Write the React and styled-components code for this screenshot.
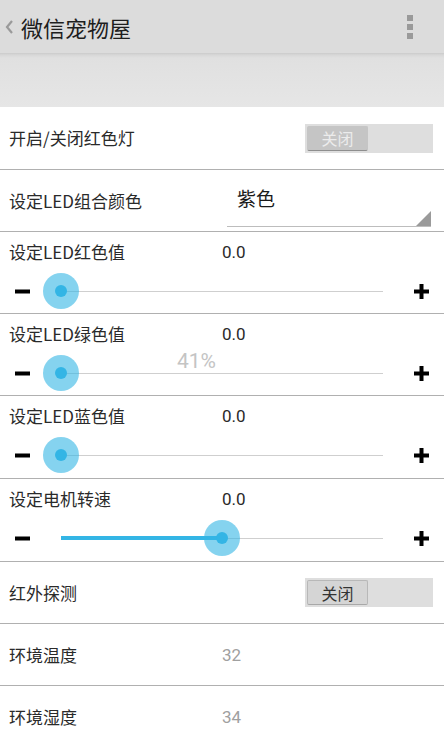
import React from "react";
import styled, { createGlobalStyle } from "styled-components";

const Global = createGlobalStyle`
  html, body { margin: 0; padding: 0; background: #fff; }
  body {
    font-family: "Noto Sans CJK SC", "Noto Sans", sans-serif;
    color: #222;
    overflow: hidden;
  }
`;

const Page = styled.div`
  width: 444px;
  display: flex;
  flex-direction: column;
`;

const Header = styled.div`
  height: 53px;
  background: #dcdcdc;
  display: flex;
  align-items: center;
  padding: 0 0 0 4px;
`;

const Back = styled.svg`
  width: 10px;
  height: 16px;
  margin-right: 7px;
`;

const Title = styled.div`
  font-size: 22px;
  color: #1e1e1e;
  flex: 1;
  line-height: 1;
`;

const Menu = styled.div`
  width: 6px;
  display: flex;
  flex-direction: column;
  gap: 3px;
  margin-right: 31px;
`;

const Dot = styled.div`
  width: 6px;
  height: 6px;
  background: #9a9a9a;
`;

const Band = styled.div`
  height: 54px;
  background: linear-gradient(#cbcbcb 0, #d8d8d8 2px, #e0e0e0 5px, #e6e6e6 100%);
`;

const Row = styled.div`
  height: ${(p) => p.$h}px;
  border-bottom: 1px solid #b0b0b0;
  display: flex;
  align-items: center;
  padding-left: 9px;
  position: relative;
  box-sizing: content-box;
`;

const Label = styled.div`
  font-size: 17px;
  color: #2a2a2a;
  width: ${(p) => p.$w || 213}px;
  flex-shrink: 0;
  line-height: 22px;
`;

const Value = styled.div`
  font-size: 17px;
  color: ${(p) => (p.$muted ? "#a0a0a0" : "#2a2a2a")};
  font-family: "Roboto", "Noto Sans", sans-serif;
  line-height: 22px;
`;

const SwitchTrack = styled.div`
  margin-left: auto;
  margin-right: 11px;
  width: 128px;
  height: 29px;
  background: #dedede;
  box-sizing: border-box;
  padding: 2px;
  display: flex;
`;

const SwitchThumb = styled.div`
  width: 61px;
  height: 25px;
  box-sizing: border-box;
  border-radius: 2px;
  display: flex;
  align-items: center;
  justify-content: center;
  font-size: 16px;
  background: ${(p) => (p.$disabled ? "#c5c5c5" : "#d5d5d5")};
  color: ${(p) => (p.$disabled ? "#ececec" : "#333")};
  border: 1px solid ${(p) => (p.$disabled ? "#c5c5c5" : "#b8b8b8")};
  border-bottom-color: ${(p) => (p.$disabled ? "#8e8e8e" : "#a8a8a8")};
`;

const Spinner = styled.div`
  width: 204px;
  height: 44px;
  margin-top: 8px;
  border-bottom: 1px solid #bdbdbd;
  position: relative;
  display: flex;
  align-items: flex-start;
  padding-left: 10px;
  box-sizing: border-box;
`;

const SpinnerText = styled.div`
  font-size: 19px;
  color: #1a1a1a;
  line-height: 24px;
  margin-top: 3px;
`;

const Corner = styled.svg`
  position: absolute;
  right: 0;
  bottom: 0;
  width: 15px;
  height: 15px;
`;

const SliderBlock = styled.div`
  height: ${(p) => p.$h}px;
  border-bottom: 1px solid #b0b0b0;
  display: flex;
  flex-direction: column;
  position: relative;
`;

const SliderHead = styled.div`
  height: 40px;
  display: flex;
  align-items: center;
  padding-left: 9px;
`;

const Control = styled.div`
  height: 38px;
  display: flex;
  align-items: center;
  padding-left: 15px;
`;

const SignBox = styled.svg`
  width: 15px;
  height: 15px;
  flex-shrink: 0;
`;

const TrackWrap = styled.div`
  width: 322px;
  margin-left: 31px;
  margin-right: 31px;
  height: 38px;
  position: relative;
  display: flex;
  align-items: center;
`;

const TrackLine = styled.div`
  width: 100%;
  height: 1px;
  background: #cfcfcf;
`;

const TrackFill = styled.div`
  position: absolute;
  left: 0;
  top: 17px;
  height: 4px;
  background: #33b5e5;
`;

const Thumb = styled.div`
  position: absolute;
  top: 1px;
  width: 36px;
  height: 36px;
  margin-left: -18px;
  border-radius: 50%;
  background: rgba(51, 181, 229, 0.6);
  display: flex;
  align-items: center;
  justify-content: center;
  &::after {
    content: "";
    width: 12px;
    height: 12px;
    border-radius: 50%;
    background: #33b5e5;
  }
`;

const Toast = styled.div`
  position: absolute;
  left: 177px;
  top: 35px;
  font-size: 21px;
  line-height: 24px;
  color: #c4c4c4;
  font-family: "Roboto", "Noto Sans", sans-serif;
`;

const Minus = () => (
  <SignBox viewBox="0 0 15 15">
    <rect x="0" y="5.5" width="15" height="4" fill="#000" />
  </SignBox>
);

const Plus = () => (
  <SignBox viewBox="0 0 15 15">
    <rect x="0" y="5.5" width="15" height="4" fill="#000" />
    <rect x="5.5" y="0" width="4" height="15" fill="#000" />
  </SignBox>
);

const Slider = ({ label, value, pct, h = 81, children }) => (
  <SliderBlock $h={h}>
    <SliderHead>
      <Label>{label}</Label>
      <Value>{value}</Value>
    </SliderHead>
    <Control>
      <Minus />
      <TrackWrap>
        <TrackLine />
        {pct > 0 && <TrackFill style={{ width: `${pct}%` }} />}
        <Thumb style={{ left: `${pct}%` }} />
      </TrackWrap>
      <Plus />
    </Control>
    {children}
  </SliderBlock>
);

export default function App() {
  return (
    <Page>
      <Global />
      <Header>
        <Back viewBox="0 0 10 16">
          <polyline points="8,2 3,8 8,14" fill="none" stroke="#9a9a9a" strokeWidth="2.2" />
        </Back>
        <Title>微信宠物屋</Title>
        <Menu>
          <Dot />
          <Dot />
          <Dot />
        </Menu>
      </Header>
      <Band />
      <Row $h={62}>
        <Label>开启/关闭红色灯</Label>
        <SwitchTrack>
          <SwitchThumb $disabled>关闭</SwitchThumb>
        </SwitchTrack>
      </Row>
      <Row $h={61}>
        <Label $w={218}>设定LED组合颜色</Label>
        <Spinner>
          <SpinnerText>紫色</SpinnerText>
          <Corner viewBox="0 0 15 15">
            <polygon points="15,0 15,15 0,15" fill="#9a9a9a" />
          </Corner>
        </Spinner>
      </Row>
      <Slider label="设定LED红色值" value="0.0" pct={0} />
      <Slider label="设定LED绿色值" value="0.0" pct={0}>
        <Toast>41%</Toast>
      </Slider>
      <Slider label="设定LED蓝色值" value="0.0" pct={0} h={82} />
      <Slider label="设定电机转速" value="0.0" pct={50} h={82} />
      <Row $h={61}>
        <Label>红外探测</Label>
        <SwitchTrack>
          <SwitchThumb>关闭</SwitchThumb>
        </SwitchTrack>
      </Row>
      <Row $h={61}>
        <Label>环境温度</Label>
        <Value $muted>32</Value>
      </Row>
      <Row $h={61}>
        <Label>环境湿度</Label>
        <Value $muted>34</Value>
      </Row>
    </Page>
  );
}
